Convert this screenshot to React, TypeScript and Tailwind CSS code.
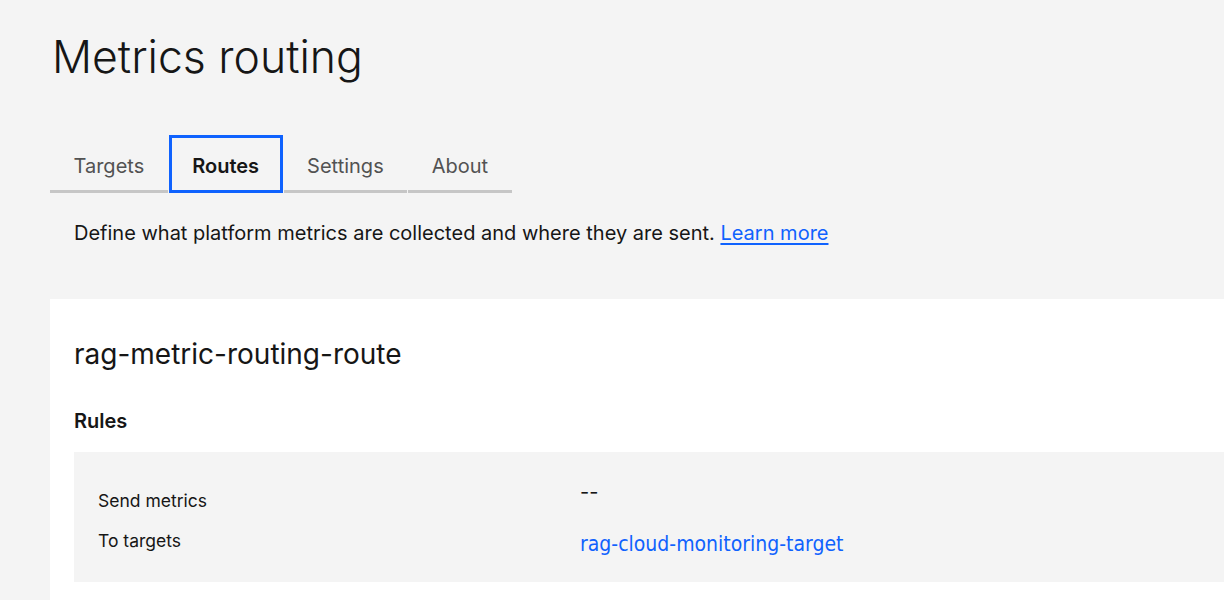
import React from 'react'

const tabs = ['Targets', 'Routes', 'Settings', 'About']

export default function App() {
  return (
    <div className="min-h-screen w-[1224px] overflow-hidden bg-[#f4f4f4] font-['Inter',sans-serif] text-[#161616]">
      <div className="w-[1400px] pl-[50px] pt-[30px]">
        <h1 className="pl-[2px] text-[44.5px] font-light leading-[54px]">Metrics routing</h1>

        {/* tabs */}
        <div className="mt-[51px] flex gap-px">
          {tabs.map((t) => {
            const active = t === 'Routes'
            return (
              <div
                key={t}
                className={
                  active
                    ? 'relative flex h-[58px] items-center border-b-[3px] border-[#c6c6c6] px-[23.5px] pt-[6px] text-[20px] font-semibold text-[#161616]'
                    : 'relative flex h-[58px] items-center border-b-[3px] border-[#c6c6c6] px-[23.5px] pt-[6px] text-[20px] text-[#525252]'
                }
              >
                {t}
                {active && <span className="absolute -bottom-[3px] left-0 right-0 top-0 border-[3px] border-[#0f62fe]" />}
              </div>
            )
          })}
        </div>

        <p className="ml-6 mt-[28px] text-[20px] leading-[24px]">
          Define what platform metrics are collected and where they are sent.{' '}
          <a href="#" className="text-[#0f62fe] underline underline-offset-[3px]">
            Learn more
          </a>
        </p>

        {/* route card */}
        <div className="mt-[54px] bg-white pb-10 pl-6 pt-[39px]">
          <h2 className="text-[28px] leading-[32px]">rag-metric-routing-route</h2>
          <h3 className="mt-[37px] text-[20px] font-semibold leading-[28px]">Rules</h3>
          <div className="mt-[17px] flex h-[130px] bg-[#f4f4f4] pl-6">
            <div className="w-[482px] pt-[37px] text-[17.5px] leading-[24px]">
              <div>Send metrics</div>
              <div className="mt-4">To targets</div>
            </div>
            <div className="pt-[26px] text-[20px] leading-[28px]">
              <div>--</div>
              <a href="#" className="mt-[24px] block font-['DejaVu_Sans',sans-serif] text-[21px] font-stretch-condensed text-[#0f62fe]">
                rag-cloud-monitoring-target
              </a>
            </div>
          </div>
        </div>
      </div>
    </div>
  )
}
